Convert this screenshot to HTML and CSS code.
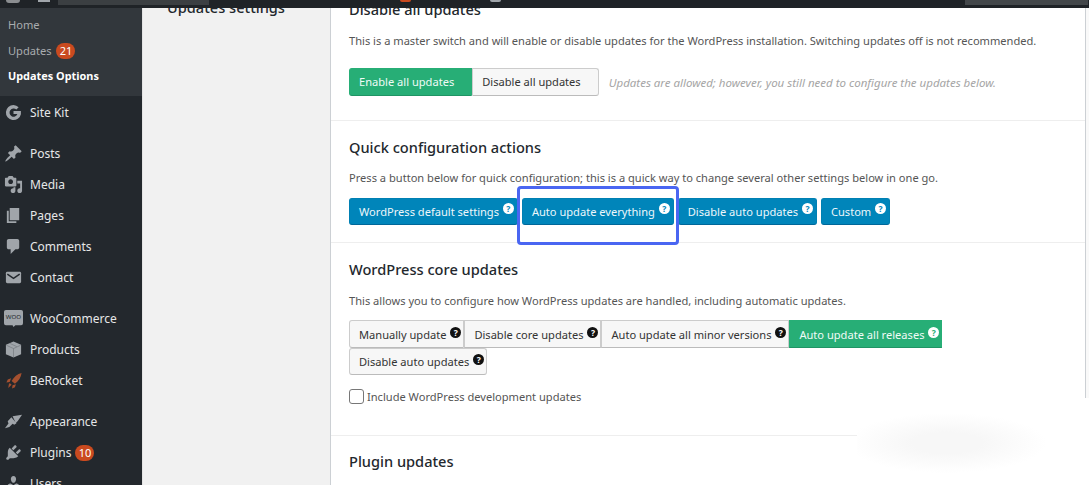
FILE: index.html
```html
<!DOCTYPE html>
<html lang="en">
<head>
  <meta charset="UTF-8">
  <title>Updates Options</title>
  <link rel="stylesheet" href="styles.css">
</head>
<body>

<div class="adminbar">
  <span class="bar-logo"></span>
  <span class="bar-home"></span>
  <span class="bar-site"></span>
  <span class="bar-dot"></span>
  <span class="bar-dot grey"></span>
  <span class="bar-user"></span>
</div>

<div class="layout">
  <div class="sidebar">
    <div class="submenu">
      <a>Home</a>
      <a>Updates <span class="count">21</span></a>
      <a class="current">Updates Options</a>
    </div>
    <div class="menu">
      <a class="item"><svg class="ico" viewBox="0 0 20 20"><path d="M10 2a8 8 0 1 0 7.800 9.800V8.300H10v3.400h4.100A4.300 4.300 0 1 1 13 6.900l2.400-2.400A8 8 0 0 0 10 2z"/></svg>Site Kit</a>
      <a class="item group"><svg class="ico" viewBox="0 0 20 20"><path d="M10.440 3.020l1.820-1.820 6.360 6.350-1.830 1.820c-1.050-.68-2.480-.57-3.410.36l-.75.75c-.92.93-1.040 2.350-.35 3.410l-1.830 1.820-2.410-2.410-2.800 2.790c-.42.42-3.380 2.710-3.800 2.290s1.860-3.390 2.280-3.810l2.790-2.790L4.100 9.360l1.830-1.820c1.050.69 2.480.57 3.400-.36l.75-.75c.93-.92 1.050-2.350.36-3.410z"/></svg>Posts</a>
      <a class="item"><svg class="ico" viewBox="0 0 20 20"><path d="M13 11V4c0-.55-.45-1-1-1h-1.670L9 1H5L3.670 3H2c-.55 0-1 .45-1 1v7c0 .55.45 1 1 1h10c.55 0 1-.45 1-1zM7 4.500c1.380 0 2.500 1.120 2.500 2.500S8.380 9.500 7 9.500 4.500 8.380 4.500 7 5.620 4.500 7 4.500zM14 6h5v10.500c0 1.380-1.120 2.500-2.500 2.500S14 17.880 14 16.500s1.120-2.500 2.500-2.500c.17 0 .34.020.5.050V9h-3V6zm-4 8.050V13h2v3.500c0 1.380-1.120 2.500-2.500 2.500S7 17.880 7 16.500 8.120 14 9.500 14c.17 0 .34.020.5.050z"/></svg>Media</a>
      <a class="item"><svg class="ico" viewBox="0 0 20 20"><path d="M6 15V2h10v13H6zm-1 1h8v2H3V5h2v11z"/></svg>Pages</a>
      <a class="item"><svg class="ico" viewBox="0 0 20 20"><path d="M5 2h9c1.100 0 2 .9 2 2v7c0 1.100-.9 2-2 2h-2l-5 5v-5H5c-1.100 0-2-.9-2-2V4c0-1.100.9-2 2-2z"/></svg>Comments</a>
      <a class="item"><svg class="ico" viewBox="0 0 20 20"><rect x="2" y="4" width="16" height="12" rx="1.500"/><path class="cut" d="M3.500 6.500L10 11l6.500-4.500"/></svg>Contact</a>
      <a class="item group"><svg class="ico" viewBox="0 0 20 20"><path d="M2 1h16a2 2 0 0 1 2 2v12a2 2 0 0 1-2 2h-6l-2 2-1-2H2a2 2 0 0 1-2-2V3a2 2 0 0 1 2-2z"/><text x="10" y="11" class="woo-word">WOO</text></svg>WooCommerce</a>
      <a class="item"><svg class="ico" viewBox="0 0 20 20"><path d="M10 1.500l8 3.500v10l-8 3.500L2 15V5z"/><path class="cut thin" d="M2.500 5.500L10 9l7.500-3.500M10 9v9M6 3.500l7.500 3.500"/></svg>Products</a>
      <a class="item"><svg class="ico rocket" viewBox="0 0 20 20"><path d="M18.500 2c-.5 4.500-3 8.500-7 11.500L8 10.500C10.500 6 14 3 18.500 2zM7.500 7.500L4 9l-1.500 3 3.500-.5zM12.500 14l-1 3-3 1.500.5-3.500zM6 12.500l2 2-3.500 3.500 .5-3.500z"/></svg>BeRocket</a>
      <a class="item group"><svg class="ico" viewBox="0 0 20 20"><path d="M9 4.500l10-1.500-4.500 6.500-2 2zM7.800 5.600l5.300 6.300-2.300 1.600-1.700-1.200-3.500 3.500-4.600 1.200 3.700-4.800-.8-2.500z"/></svg>Appearance</a>
      <a class="item"><svg class="ico" viewBox="0 0 20 20"><path d="M13.110 4.360L9.870 7.600 8 5.730l3.240-3.240c.35-.34 1.050-.2 1.560.32.520.51.660 1.210.31 1.550zm-8 1.770l.91-1.120 9.010 9.010-1.190.84c-.71.710-2.630 1.160-3.820 1.160H6.140L4.900 17.260c-.59.590-1.540.59-2.120 0-.59-.58-.59-1.530 0-2.120l1.240-1.240v-3.880c0-1.130.4-3.190 1.090-3.890zm7.260 3.970l3.240-3.240c.34-.35 1.040-.21 1.550.31.520.51.660 1.210.31 1.550l-3.240 3.250z"/></svg>Plugins <span class="count">10</span></a>
      <a class="item"><svg class="ico" viewBox="0 0 20 20"><path d="M10 9.250c-2.270 0-2.730-3.440-2.730-3.440C7 4.020 7.820 2 9.970 2c2.160 0 2.980 2.020 2.710 3.810 0 0-.41 3.440-2.680 3.440zm0 2.570L12.720 10c2.390 0 4.520 2.330 4.520 4.530v2.490s-3.650 1.130-7.240 1.130c-3.650 0-7.240-1.130-7.240-1.130v-2.490c0-2.250 1.940-4.480 4.150-4.480z"/></svg>Users</a>
    </div>
  </div>

  <div class="content">
    <div class="side-title">Updates settings</div>

    <div class="card">
      <section class="block first">
        <h3>Disable all updates</h3>
        <p class="desc">This is a master switch and will enable or disable updates for the WordPress installation. Switching updates off is not recommended.</p>
        <div class="switch-row">
          <div class="btn-group">
            <button class="btn green">Enable all updates</button>
            <button class="btn plain">Disable all updates</button>
          </div>
          <span class="hint">Updates are allowed; however, you still need to configure the updates below.</span>
        </div>
      </section>

      <section class="block quick">
        <h3>Quick configuration actions</h3>
        <p class="desc">Press a button below for quick configuration; this is a quick way to change several other settings below in one go.</p>
        <div class="quick-row">
          <button class="btn blue">WordPress default settings <span class="help">?</span></button>
          <div class="marked">
            <button class="btn blue">Auto update everything <span class="help">?</span></button>
          </div>
          <button class="btn blue">Disable auto updates <span class="help">?</span></button>
          <button class="btn blue">Custom <span class="help">?</span></button>
        </div>
      </section>

      <section class="block core">
        <h3>WordPress core updates</h3>
        <p class="desc">This allows you to configure how WordPress updates are handled, including automatic updates.</p>
        <div class="btn-group wrap">
          <button class="btn plain">Manually update <span class="help">?</span></button>
          <button class="btn plain">Disable core updates <span class="help">?</span></button>
          <button class="btn plain">Auto update all minor versions <span class="help">?</span></button>
          <button class="btn green">Auto update all releases <span class="help">?</span></button>
          <button class="btn plain alone">Disable auto updates <span class="help">?</span></button>
        </div>
        <label class="check"><span class="box"></span>Include WordPress development updates</label>
      </section>

      <section class="block plugin">
        <h3>Plugin updates</h3>
      </section>
    </div>
  </div>
</div>

<div class="smudge"></div>

</body>
</html>
```

FILE: styles.css
```css
* { box-sizing: border-box; }
body {
  margin: 0;
  height: 485px;
  overflow: hidden;
  background: #f1f1f1;
  font-family: "Noto Sans", sans-serif;
  font-size: 11.1px;
  color: #555;
  position: relative;
}

/* top bar, mostly out of frame */
.adminbar {
  height: 8px;
  background: #1f2327;
  display: flex;
  align-items: flex-start;
}
.bar-logo {
  width: 14px;
  height: 3px;
  margin-left: 6px;
  background: #8a8d90;
  border-radius: 0 0 7px 7px;
}
.bar-home {
  width: 12px;
  height: 2px;
  margin-left: 18px;
  background: #a0a5aa;
}
.bar-site {
  width: 151px;
  height: 5px;
  margin-left: 8px;
  background: #3b3f42;
}
.bar-dot {
  width: 11px;
  height: 2px;
  margin-left: 191px;
  background: #ca4a1f;
  border-radius: 0 0 6px 6px;
}
.bar-dot.grey {
  margin-left: 79px;
  background: #a0a5aa;
}
.bar-user {
  width: 123px;
  height: 5px;
  margin-left: 464px;
  background: #43474a;
}

.layout {
  display: flex;
  height: 477px;
  overflow: hidden;
}

/* left menu */
.sidebar {
  width: 143px;
  flex: none;
  background: #23282d;
  border-right: 1px solid #e4e4e4;
}
.submenu {
  background: #32373c;
  height: 88px;
  padding-top: 4px;
}
.submenu a {
  display: block;
  height: 25.5px;
  line-height: 25px;
  padding-left: 8px;
  color: #a9acaf;
}
.submenu .current {
  color: #fff;
  font-weight: 700;
  font-size: 10.9px;
}
.count {
  display: inline-block;
  background: #ca4a1f;
  color: #fff;
  border-radius: 10px;
  min-width: 19px;
  height: 16px;
  line-height: 16px;
  font-size: 11px;
  text-align: center;
  margin-left: 2px;
}
.menu { padding-top: 1px; }
.item {
  display: flex;
  align-items: center;
  height: 31px;
  padding-left: 4px;
  font-size: 12px;
  color: #e6e7e8;
}
.item .count { margin-left: 4px; }
.item.group { margin-top: 10px; }
.ico {
  width: 19px;
  height: 19px;
  margin-right: 7px;
  fill: #a0a5aa;
  flex: none;
}
.ico.rocket { fill: #a4502f; }
.ico .cut {
  fill: none;
  stroke: #23282d;
  stroke-width: 1.6;
}
.ico .cut.thin {
  stroke-width: .6;
  stroke: #6a6f74;
}
.woo-word {
  font-size: 6.5px;
  text-anchor: middle;
  fill: #23282d;
}

/* main */
.content {
  flex: 1;
  display: flex;
  min-width: 0;
  padding-right: 3px;
  background: #f9f9f9;
}
.side-title {
  width: 187px;
  flex: none;
  padding-left: 24px;
  background: #f1f1f1;
  font-size: 14.6px;
  font-weight: 500;
  line-height: 20px;
  color: #23282d;
  position: relative;
  top: -11px;
  height: 490px;
}
.card {
  flex: 1;
  background: #fff;
  border-left: 1px solid #ccd0d4;
  border-right: 1px solid #ccd0d4;
}
.block {
  padding: 0 18px;
  border-bottom: 1px solid #eee;
}
.block h3 {
  margin: 0;
  font-size: 14.6px;
  font-weight: 500;
  color: #23282d;
  line-height: 20px;
}
.desc {
  margin: 0;
  line-height: 18px;
  white-space: nowrap;
}
.first { height: 122px; margin-top: -9px; }
.first .desc { margin-top: 13px; }
.switch-row {
  display: flex;
  align-items: center;
  margin-top: 18px;
}
.switch-row .btn {
  padding-right: 17px;
  padding-bottom: 1px;
  height: 28px;
}
.hint {
  font-style: italic;
  color: #a5a5a5;
  margin-left: 10px;
  font-size: 11.5px;
}
.quick { height: 122px; padding-top: 16px; }
.quick .desc { margin-top: 12px; }
.quick-row {
  display: flex;
  align-items: flex-start;
  gap: 4px;
  margin-top: 11px;
}
.quick-row .btn {
  height: 27px;
  padding-right: 3px;
  padding-bottom: 1px;
}
.quick-row .help { vertical-align: 4px; }
/* the blue marker drawn on top of the screenshot */
.marked {
  position: relative;
  display: flex;
}
.marked::after {
  content: "";
  position: absolute;
  top: -12px;
  right: -5px;
  bottom: -20px;
  left: -5px;
  border: 3px solid #4a66f2;
  border-radius: 4px;
}
.core { height: 193px; padding-top: 16px; }
.core .desc { margin-top: 13px; }
.core .btn-group { margin-top: 10px; }
.core .btn { padding-top: 1px; }
.plugin { border-bottom: 0; padding-top: 15px; }

.btn {
  font-family: inherit;
  font-size: 11.1px;
  height: 27.5px;
  padding: 0 2px 0 9px;
  border: 1px solid transparent;
  border-radius: 3px;
  white-space: nowrap;
}
.btn-group { display: flex; }
.btn-group.wrap { flex-wrap: wrap; width: 600px; }
.btn-group .btn { border-radius: 0; }
.btn-group .btn:first-child { border-radius: 3px 0 0 3px; }
.btn-group .btn:last-child { border-radius: 0 3px 3px 0; }
.btn-group .btn.alone { border-radius: 3px; }
.green {
  background: #27ae76;
  color: #f0fbf6;
  border-color: #27ae76;
  border-bottom-color: #1f9464;
}
.plain {
  background: #f7f7f7;
  color: #333;
  border-color: #ccc;
  border-bottom-color: #bbb;
}
.blue {
  background: #0085ba;
  color: #eef7fb;
  border-color: #0080b3;
  border-bottom-color: #006799;
}
.help {
  display: inline-block;
  width: 11px;
  height: 11px;
  margin-left: 1px;
  border-radius: 50%;
  background: #111;
  color: #fff;
  font-size: 8.5px;
  font-weight: 700;
  line-height: 11px;
  text-align: center;
  vertical-align: 3px;
}
.blue .help {
  background: #fff;
  color: #0085ba;
}
.green .help {
  background: #fff;
  color: #27ae76;
}
.check {
  display: flex;
  align-items: center;
  margin-top: 14px;
  gap: 3px;
}
.box {
  width: 15px;
  height: 15px;
  border: 1px solid #777;
  border-radius: 3px;
  background: #fff;
}

/* rubbed-out corner of the screenshot */
.smudge {
  position: absolute;
  left: 857px;
  top: 398px;
  width: 232px;
  height: 87px;
  background:
    radial-gradient(ellipse 100px 30px at 90px 45px, #f7f7f7 35%, rgba(255,255,255,0) 100%),
    #fff;
}
```
